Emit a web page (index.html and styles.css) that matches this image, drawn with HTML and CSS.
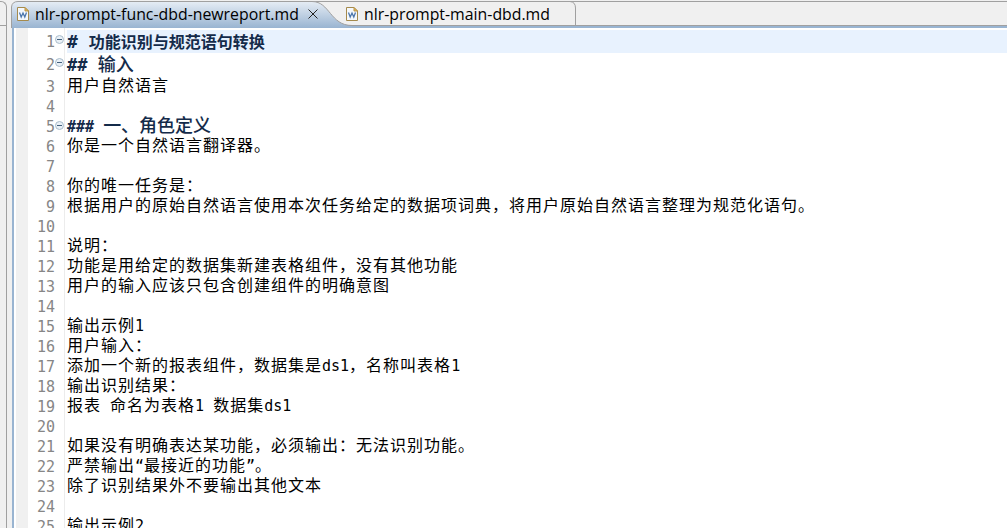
FILE: index.html
```html
<!DOCTYPE html>
<html lang="zh-CN">
<head>
    <meta charset="UTF-8">
    <title>nlr-prompt-func-dbd-newreport.md</title>
    <link rel="stylesheet" href="styles.css">
</head>
<body>

    <div class="workbench">
        <div class="side-view"></div>

        <div class="editor">
            <div class="tabs">
                <svg class="tabs-shape" width="995" height="28" viewBox="0 0 995 28">
                    <defs>
                        <linearGradient id="active" x1="0" y1="0" x2="0" y2="1">
                            <stop offset="0" stop-color="#e6edf5"/>
                            <stop offset="1" stop-color="#99b4d1"/>
                        </linearGradient>
                    </defs>
                    <path d="M6 1.5H995" fill="none" stroke="#a0a0a0"/>
                    <path d="M330 25.5H995" fill="none" stroke="#a0a0a0"/>
                    <path d="M558 1.5Q563.5 2 563.5 8V25" fill="none" stroke="#a0a0a0"/>
                    <rect y="26" width="995" height="2" fill="#99b4d1"/>
                    <path d="M0 28V7Q0 1.5 6 1.5H300C318 1.5 318 25.5 340 25.5V28Z" fill="url(#active)"/>
                    <path d="M-.5 28V7Q0 1.5 6 1.5H300C318 1.5 318 25.5 340 25.5" fill="none" stroke="#a0a0a0"/>
                </svg>
                <div class="tab tab-active">
                    <svg class="file-icon" width="12" height="14" viewBox="0 0 12 14">
                        <path d="M.5.5H8L11.5 4V13.5H.5Z" fill="#f4f8fc" stroke="#a58a4c"/>
                        <path d="M8 .5V4H11.5Z" fill="#e5b95c" stroke="#b8944a"/>
                        <path d="M2.5 5.5L4.2 10L6 6L7.8 10L9.5 5.5" fill="none" stroke="#4e78ad" stroke-width="1.3"/>
                    </svg>
                    <span class="tab-name">nlr-prompt-func-dbd-newreport.md</span>
                    <svg class="close" width="10" height="10" viewBox="0 0 10 10">
                        <path d="M.5.5L9.5 9.5M9.5.5L.5 9.5" stroke="#222"/>
                    </svg>
                </div>
                <div class="tab">
                    <svg class="file-icon" width="12" height="14" viewBox="0 0 12 14">
                        <path d="M.5.5H8L11.5 4V13.5H.5Z" fill="#f4f8fc" stroke="#a58a4c"/>
                        <path d="M8 .5V4H11.5Z" fill="#e5b95c" stroke="#b8944a"/>
                        <path d="M2.5 5.5L4.2 10L6 6L7.8 10L9.5 5.5" fill="none" stroke="#4e78ad" stroke-width="1.3"/>
                    </svg>
                    <span class="tab-name">nlr-prompt-main-dbd.md</span>
                </div>
            </div>

            <div class="source">
                <div class="line h1 current"><span class="num">1</span><span class="fold"></span><span class="text"><b>#&nbsp;</b>功能识别与规范语句转换</span></div>
                <div class="line h2"><span class="num">2</span><span class="fold"></span><span class="text"><b>##&nbsp;</b>输入</span></div>
                <div class="line"><span class="num">3</span><span class="text">用户自然语言</span></div>
                <div class="line"><span class="num">4</span><span class="text"></span></div>
                <div class="line h3"><span class="num">5</span><span class="fold"></span><span class="text"><b>###&nbsp;</b>一、角色定义</span></div>
                <div class="line"><span class="num">6</span><span class="text">你是一个自然语言翻译器。</span></div>
                <div class="line"><span class="num">7</span><span class="text"></span></div>
                <div class="line"><span class="num">8</span><span class="text">你的唯一任务是：</span></div>
                <div class="line"><span class="num">9</span><span class="text">根据用户的原始自然语言使用本次任务给定的数据项词典，将用户原始自然语言整理为规范化语句。</span></div>
                <div class="line"><span class="num">10</span><span class="text"></span></div>
                <div class="line"><span class="num">11</span><span class="text">说明：</span></div>
                <div class="line"><span class="num">12</span><span class="text">功能是用给定的数据集新建表格组件，没有其他功能</span></div>
                <div class="line"><span class="num">13</span><span class="text">用户的输入应该只包含创建组件的明确意图</span></div>
                <div class="line"><span class="num">14</span><span class="text"></span></div>
                <div class="line"><span class="num">15</span><span class="text">输出示例<i>1</i></span></div>
                <div class="line"><span class="num">16</span><span class="text">用户输入：</span></div>
                <div class="line"><span class="num">17</span><span class="text">添加一个新的报表组件，数据集是<i>ds1</i>，名称叫表格<i>1</i></span></div>
                <div class="line"><span class="num">18</span><span class="text">输出识别结果：</span></div>
                <div class="line"><span class="num">19</span><span class="text">报表<i>&nbsp;</i>命名为表格<i>1&nbsp;</i>数据集<i>ds1</i></span></div>
                <div class="line"><span class="num">20</span><span class="text"></span></div>
                <div class="line"><span class="num">21</span><span class="text">如果没有明确表达某功能，必须输出：无法识别功能。</span></div>
                <div class="line"><span class="num">22</span><span class="text">严禁输出<i>“</i>最接近的功能<i>”</i>。</span></div>
                <div class="line"><span class="num">23</span><span class="text">除了识别结果外不要输出其他文本</span></div>
                <div class="line"><span class="num">24</span><span class="text"></span></div>
                <div class="line"><span class="num">25</span><span class="text">输出示例<i>2</i></span></div>
            </div>
        </div>
    </div>

</body>
</html>
```

FILE: styles.css
```css
body { margin: 0; background-color: #f0f0f0; overflow: hidden; }
.workbench { display: flex; height: 528px; overflow: hidden; }

.side-view { box-sizing: border-box; width: 7px; height: 540px; margin: 1px 5px 0 0; border-top: 1px solid #a0a0a0; border-right: 1px solid #a0a0a0; border-top-right-radius: 6px; background: linear-gradient(#a0a0a0, #a0a0a0) 0 23px / 100% 1px no-repeat; }

.editor { flex: 1; }
.tabs { position: relative; display: flex; height: 28px; }
.tabs-shape { position: absolute; top: 0; left: 0; overflow: visible; }
.tab { position: relative; display: flex; align-items: center; height: 28px; padding-left: 5px; box-sizing: border-box; }
.tab-active { width: 329px; }
.tab .file-icon { margin-right: 6px; }
.tab-name { font-family: "Open Sans", "Noto Sans", sans-serif; font-size: 15.85px; line-height: 26px; color: #000; white-space: nowrap; }
.close { margin-left: 9px; }

.source { box-sizing: border-box; height: 500px; padding-top: 2px; border-left: 2px solid #99b4d1; background: linear-gradient(to right, #fff 2px, #f0f0f0 2px, #f0f0f0 14px, #fff 14px, #fff 50px, #ececec 50px, #ececec 51px, #fff 51px); overflow: hidden; }
.line { display: flex; height: 20px; line-height: 20px; font-family: "Noto Sans CJK SC", sans-serif; font-size: 16px; white-space: nowrap; color: #000; }
.num { width: 41px; margin-top: 1px; text-align: right; font-family: "DejaVu Sans Mono", monospace; font-size: 15px; color: #868686; }
.text { flex: 1; margin-left: 12px; line-height: 16px; letter-spacing: 1px; font-weight: 400; }
.text i, .text b { font-family: "DejaVu Sans Mono", monospace; font-size: 15px; line-height: 1; font-style: normal; font-weight: 400; letter-spacing: 0; }

.h1, .h2 { height: 23px; line-height: 23px; }
.h1 .text, .h2 .text, .h3 .text { margin-left: 3px; font-weight: 700; letter-spacing: 0; color: #142b4a; }
.h1 .text { line-height: 23px; }
.h2 .text { line-height: 21px; }
.h1 b, .h2 b, .h3 b { font-weight: 700; }
.h2 .text, .h3 .text { font-size: 18px; font-weight: 500; }
.h1 b { font-size: 18px; }
.h2 b { font-size: 17px; }
.current .text { background-color: #e8f2fe; }

.fold { box-sizing: border-box; position: relative; width: 9px; height: 9px; margin-top: 5px; border: 1px solid #a9bccb; border-radius: 50%; background-color: #e9f0f6; }
.fold::after { content: ""; position: absolute; top: 3px; left: 1px; width: 5px; height: 1px; background-color: #41607d; }
```
